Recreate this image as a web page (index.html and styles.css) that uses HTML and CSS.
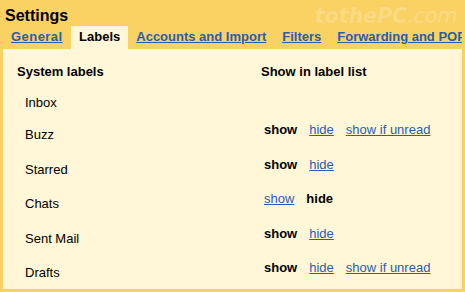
FILE: index.html
```html
<!DOCTYPE html>
<html>
<head>
<meta charset="utf-8">
<link rel="stylesheet" href="styles.css">
</head>
<body>
<div class="page">
  <div class="title">Settings</div>
  <div class="watermark"><b>tothePC</b>.com</div>
  <div class="tabs">
    <a class="tab wide" href="#">General</a>
    <span class="tab active">Labels</span>
    <a class="tab" href="#">Accounts and Import</a>
    <a class="tab" href="#">Filters</a>
    <a class="tab" href="#">Forwarding and POP/IMAP</a>
  </div>
  <div class="panel">
    <div class="head">
      <div>System labels</div>
      <div>Show in label list</div>
    </div>
    <div class="rows">
      <div class="row first">
        <div class="name">Inbox</div>
        <div class="opts"></div>
      </div>
      <div class="row">
        <div class="name">Buzz</div>
        <div class="opts"><b>show</b><a href="#">hide</a><a href="#">show if unread</a></div>
      </div>
      <div class="row">
        <div class="name">Starred</div>
        <div class="opts"><b>show</b><a href="#">hide</a></div>
      </div>
      <div class="row">
        <div class="name">Chats</div>
        <div class="opts"><a href="#">show</a><b>hide</b></div>
      </div>
      <div class="row">
        <div class="name">Sent Mail</div>
        <div class="opts"><b>show</b><a href="#">hide</a></div>
      </div>
      <div class="row">
        <div class="name">Drafts</div>
        <div class="opts"><b>show</b><a href="#">hide</a><a href="#">show if unread</a></div>
      </div>
    </div>
  </div>
</div>
</body>
</html>
```

FILE: styles.css
```css
html, body {
  margin: 0;
  padding: 0;
}
body {
  background: #fad163;
  font-family: "Liberation Sans", Arial, sans-serif;
  font-size: 13px;
  color: #000;
}
.page {
  position: relative;
  width: 465px;
  height: 292px;
  overflow: hidden;
}
.title {
  font-size: 16px;
  font-weight: bold;
  line-height: 18px;
  padding: 7px 0 0 5px;
  height: 19px;
}
.watermark {
  position: absolute;
  top: 4px;
  left: 315px;
  font-family: "DejaVu Sans", sans-serif;
  font-style: italic;
  font-size: 20.5px;
  line-height: 24px;
  color: #fcda82;
  white-space: nowrap;
}
.watermark b {
  font-weight: bold;
}
.tabs {
  display: flex;
  margin: 0 3px;
  height: 23px;
  overflow: hidden;
  white-space: nowrap;
}
.tab {
  flex: none;
  padding: 3px 8px 5px;
  line-height: 15px;
  font-weight: bold;
  color: #2a5db0;
  text-decoration: underline;
}
.tab.wide {
  letter-spacing: 0.45px;
  padding-right: 8.5px;
}
.tab.active {
  background: #fff7d7;
  color: #000;
  text-decoration: none;
}
.panel {
  margin: 0 3px;
  background: #fff7d7;
  height: 240px;
  padding: 15px 14px 0;
  box-sizing: border-box;
}
.head {
  display: grid;
  grid-template-columns: 244px 1fr;
  font-weight: bold;
  line-height: 15px;
}
.rows {
  margin-top: 11px;
}
.row {
  display: grid;
  grid-template-columns: 244px 1fr;
  height: 34.6px;
  line-height: 15px;
}
.row.first {
  height: 32px;
}
.name {
  padding: 5px 0 0 8px;
}
.opts {
  display: flex;
  gap: 12px;
  padding-left: 3px;
}
.opts a {
  color: #2a5db0;
  text-decoration: underline;
}
.opts b {
  font-weight: bold;
}
```
